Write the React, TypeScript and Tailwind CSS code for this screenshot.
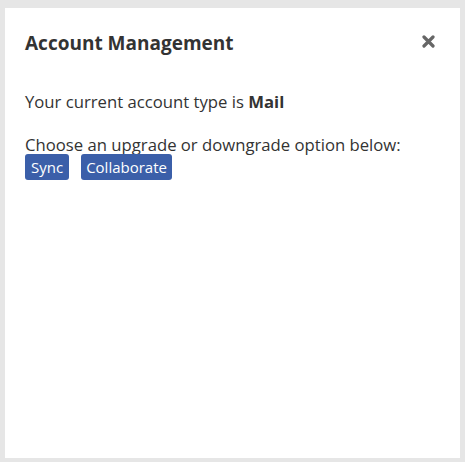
const App = () => {
  return (
    <div
      className="h-[462px] w-[465px] bg-[#e6e6e6] pt-[8px] pl-[5px] pr-[5px] pb-[4px]"
      style={{ fontFamily: '"Open Sans", "Noto Sans", sans-serif' }}
    >
      <div className="h-[450px] w-[455px] bg-white px-[20px]">
        {/* Header */}
        <div className="flex items-center justify-between pt-[22px]">
          <h2 className="text-[19px] font-bold text-[#333333] leading-[26px]">
            Account Management
          </h2>
          <button className="mr-[5px] -mt-[4px] text-[#666666]">
            <svg width="13" height="13" viewBox="0 0 13 13">
              <path
                d="M2 2 L11 11 M11 2 L2 11"
                stroke="currentColor"
                strokeWidth="3.2"
                strokeLinecap="round"
              />
            </svg>
          </button>
        </div>

        {/* Body */}
        <div className="pt-[35px] text-[16.7px] text-[#333333]">
          <p className="leading-[22px]">
            Your current account type is <span className="font-bold">Mail</span>
          </p>
          <p className="mt-[22px] leading-[20px]">
            Choose an upgrade or downgrade option below:
          </p>
          <div className="-mt-[1px] flex gap-[12px]">
            <button className="h-[26px] rounded-[3px] bg-[#3b5fa9] px-[6px] text-[15px] leading-[26px] text-white">
              Sync
            </button>
            <button className="h-[26px] rounded-[3px] bg-[#3b5fa9] px-[5px] text-[15px] leading-[26px] text-white">
              Collaborate
            </button>
          </div>
        </div>
      </div>
    </div>
  );
};

export default App;
